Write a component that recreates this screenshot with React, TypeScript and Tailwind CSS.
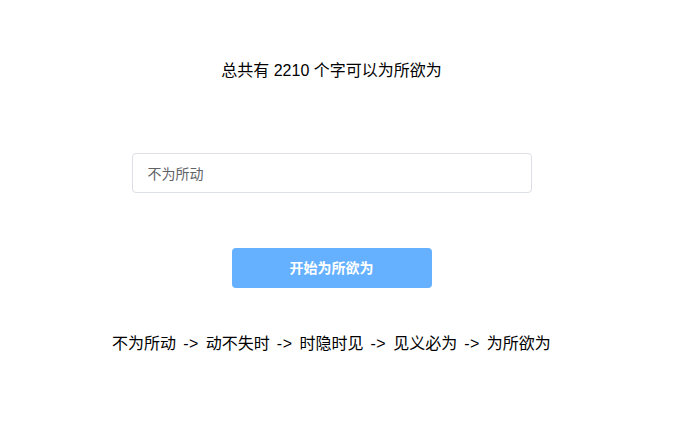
const chain = ["不为所动", "动不失时", "时隐时见", "见义必为", "为所欲为"]

export default function App() {
  return (
    <div className="min-h-[427px] w-full bg-white font-['Liberation_Sans','Noto_Sans_CJK_SC',sans-serif] text-black">
      <div className="flex w-[663px] flex-col items-center">
        {/* ── 标题 ── */}
        <p className="mt-[60px] h-[22px] text-[16px] leading-[22px]">总共有 2210 个字可以为所欲为</p>

        {/* ── 输入框 ── */}
        <div className="mt-[71px] w-[400px]">
          <input
            className="h-[40px] w-full rounded-[4px] border border-[#dcdfe6] px-[15px] text-[14px] text-[#606266] outline-none"
            defaultValue="不为所动"
          />
        </div>

        {/* ── 按钮 ── */}
        <button className="mt-[55px] h-[40px] w-[200px] rounded-[4px] bg-[#66b1ff] text-[14px] font-bold text-white">
          开始为所欲为
        </button>

        {/* ── 成语链 ── */}
        <p className="mt-[45px] text-[16px] leading-[22px]">
          {chain.map((w, i) => (
            <span key={w}>
              {i > 0 && <span className="mx-[7px] tracking-[0.5px]">-&gt;</span>}
              {w}
            </span>
          ))}
        </p>
      </div>
    </div>
  )
}
